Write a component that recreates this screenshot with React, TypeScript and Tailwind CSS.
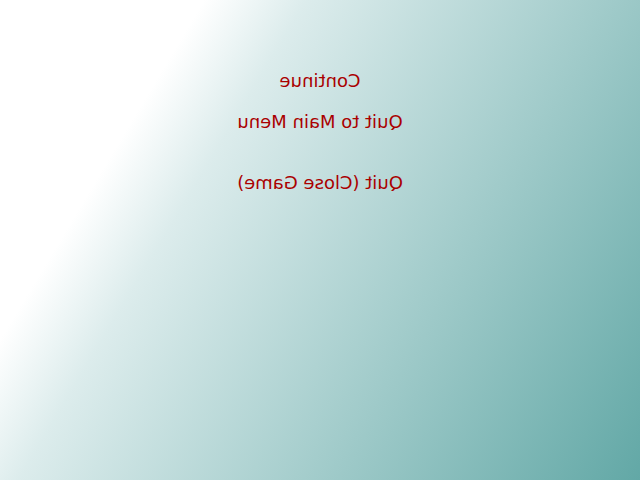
export default function App() {
  const items = ["Continue", "Quit to Main Menu", "Quit (Close Game)"];

  return (
    <div className="w-[640px] h-[480px] overflow-hidden bg-[linear-gradient(121deg,#ffffff_22%,#dcecec_33%,#62a8a6_100%)] font-['DejaVu_Sans',sans-serif]">
      <div className="flex flex-col items-center pt-[70px] -scale-x-100">
        <button className="text-[18px] leading-[21px] text-[#aa0000]">{items[0]}</button>
        <button className="mt-[20px] text-[18px] leading-[21px] text-[#aa0000]">{items[1]}</button>
        <button className="mt-[40px] text-[18px] leading-[21px] text-[#aa0000]">{items[2]}</button>
      </div>
    </div>
  );
}
